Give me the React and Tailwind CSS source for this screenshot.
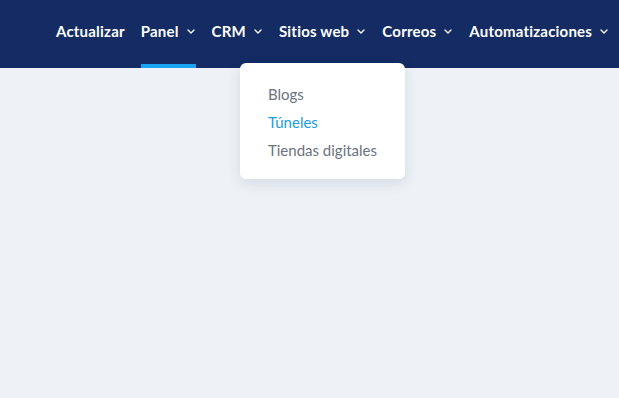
const navItems = [
  { label: 'Actualizar', hasMenu: false },
  { label: 'Panel', hasMenu: true, active: true },
  { label: 'CRM', hasMenu: true },
  { label: 'Sitios web', hasMenu: true, open: true },
  { label: 'Correos', hasMenu: true },
  { label: 'Automatizaciones', hasMenu: true },
];

const siteLinks = [
  { label: 'Blogs' },
  { label: 'Túneles', current: true },
  { label: 'Tiendas digitales' },
];

// Small chevron next to nav labels
const Chevron = () => (
  <svg width="8" height="5" viewBox="0 0 8 5" className="ml-[8px] mr-[1px] shrink-0">
    <polyline points="1,1 4,4 7,1" fill="none" stroke="white" strokeWidth="1.3" strokeLinecap="round" strokeLinejoin="round" />
  </svg>
);

// Dropdown for "Sitios web"
const SitesMenu = () => (
  <div className="absolute left-[-39px] top-[63px] z-10 w-[165px] rounded-md bg-white pt-[17px] pb-[15px] shadow-[0_4px_14px_rgba(20,43,99,0.12)]">
    {siteLinks.map((link) => (
      <div
        key={link.label}
        className={`pl-[28px] h-[28px] flex items-center text-[15px] font-normal whitespace-nowrap ${
          link.current ? 'text-[#1b9be3]' : 'text-[#6b7280]'
        }`}
      >
        {link.label}
      </div>
    ))}
  </div>
);

const App = () => {
  return (
    <div className="h-[398px] w-full bg-[#eef2f6] font-['Lato',sans-serif]">
      <header className="h-[68px] bg-[#142c63] flex pl-[56px] overflow-visible">
        <nav className="flex gap-[16px]">
          {navItems.map((item) => (
            <div key={item.label} className="relative flex items-center h-full shrink-0 pb-[5px]">
              <span className="text-white font-bold text-[15px] tracking-[0.2px] whitespace-nowrap">{item.label}</span>
              {item.hasMenu && <Chevron />}
              {item.active && (
                <div className="absolute left-0 right-0 bottom-0 h-[4px] bg-[#18a3f5]"></div>
              )}
              {item.open && <SitesMenu />}
            </div>
          ))}
        </nav>
      </header>
    </div>
  );
};

export default App;
